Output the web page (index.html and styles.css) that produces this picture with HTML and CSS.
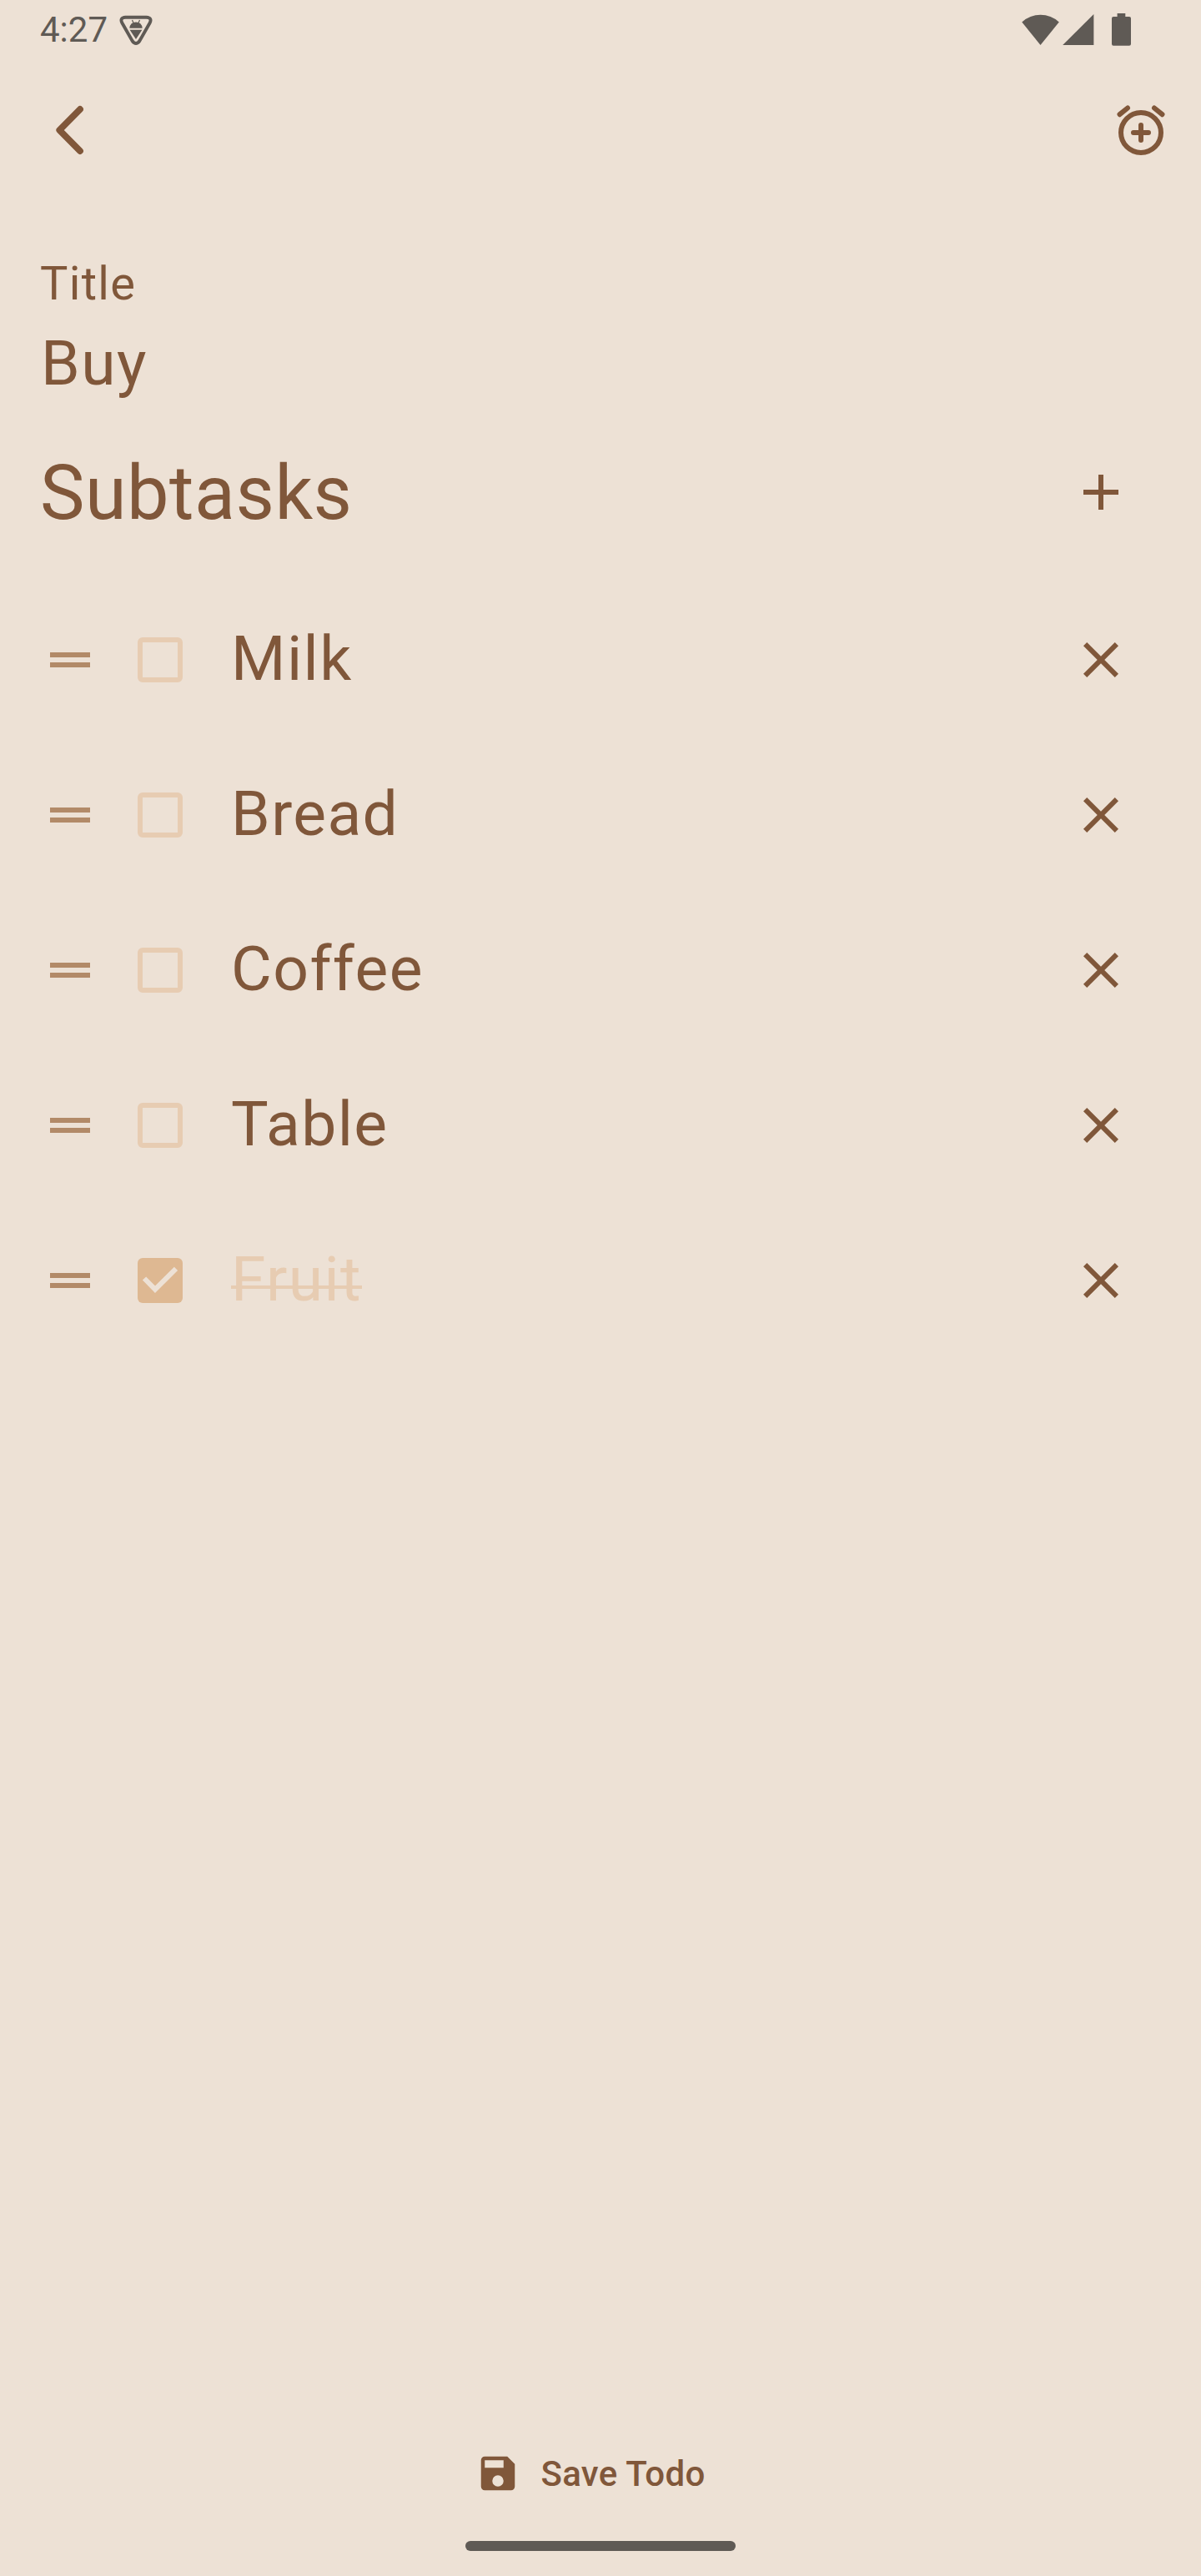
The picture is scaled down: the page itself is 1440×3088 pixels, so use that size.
FILE: index.html
```html
<!DOCTYPE html>
<html lang="en">
<head>
<meta charset="utf-8">
<title>Edit todo</title>
<link rel="stylesheet" href="styles.css">
</head>
<body>
<div class="screen">
  <header class="status-bar">
    <span class="clock">4:27</span>
    <svg class="shield" width="40" height="40" viewBox="0 0 40 40">
      <path d="M7.500 4.700H32.500Q39.800 5.200 36.600 11.500L24.400 33Q20 39 15.600 33L3.400 11.500Q.2 5.200 7.500 4.700Z" fill="none" stroke="currentColor" stroke-width="3.900"/>
      <path d="M17 11.600L15.500 8M23 11.600L24.500 8" fill="none" stroke="currentColor" stroke-width="1.200"/>
      <path d="M12.300 17.700Q13.200 10.500 20 10.500T27.700 17.700ZM12.600 19.700H27.400L20 30.900Z" fill="currentColor"/>
    </svg>
    <svg class="signals" width="140" height="72" viewBox="0 0 140 72" fill="currentColor">
      <path d="M5.300 26.500A33 33 0 0 1 49.800 26.500L27.500 54Z"/>
      <path d="M54.200 54L91.400 17V54Z"/>
      <path d="M119.600 16H129.300V20H134Q136 20 136 22V52.700Q136 54.700 134 54.700H115Q113 54.700 113 52.700V22Q113 20 115 20H119.600Z"/>
    </svg>
  </header>

  <nav class="top-bar">
    <svg width="72" height="72" viewBox="0 0 72 72" fill="none" stroke="currentColor" stroke-width="7.800" stroke-linecap="round" stroke-linejoin="round"><path d="M48 11L23.300 36L48 61"/></svg>
    <svg width="72" height="72" viewBox="0 0 72 72" fill="none" stroke="currentColor" stroke-width="6" stroke-linecap="round"><circle cx="36" cy="39" r="24"/><path d="M27 39H45M36 30V48M10.500 17.200L20 9.500M61.500 17.200L52 9.500"/></svg>
  </nav>

  <main class="content">
    <label class="field-label">Title</label>
    <div class="field-value">Buy</div>

    <div class="section-head">
      <h1 class="section-title">Subtasks</h1>
      <svg class="action" width="72" height="72" viewBox="0 0 24 24"><path d="M19 13h-6v6h-2v-6H5v-2h6V5h2v6h6z"/></svg>
    </div>

    <ul class="tasks">
      <li class="task"><span class="handle"></span><span class="box"></span><span class="name">Milk</span><svg class="action" width="72" height="72" viewBox="0 0 24 24"><path d="M19 6.41L17.59 5 12 10.59 6.41 5 5 6.41 10.59 12 5 17.59 6.41 19 12 13.41 17.59 19 19 17.59 13.41 12z"/></svg></li>
      <li class="task"><span class="handle"></span><span class="box"></span><span class="name">Bread</span><svg class="action" width="72" height="72" viewBox="0 0 24 24"><path d="M19 6.41L17.59 5 12 10.59 6.41 5 5 6.41 10.59 12 5 17.59 6.41 19 12 13.41 17.59 19 19 17.59 13.41 12z"/></svg></li>
      <li class="task"><span class="handle"></span><span class="box"></span><span class="name">Coffee</span><svg class="action" width="72" height="72" viewBox="0 0 24 24"><path d="M19 6.41L17.59 5 12 10.59 6.41 5 5 6.41 10.59 12 5 17.59 6.41 19 12 13.41 17.59 19 19 17.59 13.41 12z"/></svg></li>
      <li class="task"><span class="handle"></span><span class="box"></span><span class="name">Table</span><svg class="action" width="72" height="72" viewBox="0 0 24 24"><path d="M19 6.41L17.59 5 12 10.59 6.41 5 5 6.41 10.59 12 5 17.59 6.41 19 12 13.41 17.59 19 19 17.59 13.41 12z"/></svg></li>
      <li class="task"><span class="handle"></span><span class="box checked"><svg width="54" height="54" viewBox="0 0 54 54" fill="none" stroke="currentColor" stroke-width="6"><path d="M8 24.500L21 37.700L46 12.800"/></svg></span><span class="name done">Fruit</span><svg class="action" width="72" height="72" viewBox="0 0 24 24"><path d="M19 6.41L17.59 5 12 10.59 6.41 5 5 6.41 10.59 12 5 17.59 6.41 19 12 13.41 17.59 19 19 17.59 13.41 12z"/></svg></li>
    </ul>
  </main>

  <footer class="footer">
    <button class="save">
      <svg width="54" height="54" viewBox="0 0 24 24" fill="currentColor"><path fill-rule="evenodd" d="M17 3H5C3.890 3 3 3.900 3 5V19C3 20.100 3.890 21 5 21H19C20.100 21 21 20.100 21 19V7ZM12 19A3 3 0 1 1 12 13A3 3 0 1 1 12 19ZM15 9H5V5H15Z"/></svg>
      <span>Save Todo</span>
    </button>
    <div class="home-bar"></div>
  </footer>
</div>
</body>
</html>
```
FILE: styles.css
```css
* { box-sizing: border-box; }

body {
  margin: 0;
  background: #ede1d5;
  color: #80573a;
  font-family: Roboto, sans-serif;
}

svg { display: block; flex: none; }

.screen {
  width: 1440px;
  height: 3088px;
  display: flex;
  flex-direction: column;
}

.status-bar {
  height: 72px;
  padding: 0 80px 0 48px;
  display: flex;
  align-items: center;
  color: #5f5a55;
}

.clock {
  width: 95px;
  font-size: 42px;
  line-height: 72px;
}

.signals { margin-left: auto; }

.top-bar {
  height: 168px;
  padding: 0 36px 0 48px;
  display: flex;
  align-items: center;
  justify-content: space-between;
}

.content {
  flex: 1;
  padding: 55px 84px 0 48px;
}

.field-label {
  display: block;
  font-size: 56px;
  line-height: 90px;
  letter-spacing: 1.3px;
}

.field-value {
  padding-left: 1px;
  font-size: 75px;
  line-height: 100px;
  letter-spacing: 1.5px;
}

.section-head {
  height: 210px;
  display: flex;
  align-items: center;
  justify-content: space-between;
}

.section-title {
  margin: 0;
  padding-top: 3px;
  font-size: 90px;
  font-weight: 400;
  line-height: 120px;
  letter-spacing: 0.5px;
}

.action { fill: currentColor; }

.tasks {
  margin: 3px 0 0;
  padding: 0 0 0 12px;
  list-style: none;
}

.task {
  height: 186px;
  display: flex;
  align-items: center;
}

.handle {
  width: 48px;
  height: 18px;
  border: solid #b28a68;
  border-width: 6px 0;
}

.box {
  width: 54px;
  height: 54px;
  margin: 0 58px 0 57px;
  border: 6px solid #e7ccb2;
  border-radius: 6px;
}

.box.checked {
  border: 0;
  background: #deb892;
  color: #ede1d5;
}

.name {
  margin-right: auto;
  padding-bottom: 5px;
  font-size: 75px;
  line-height: 100px;
  letter-spacing: 1.4px;
}

.name.done {
  color: #e7ccb2;
  background: linear-gradient(#e7ccb2, #e7ccb2) 0 58px / 100% 4px no-repeat;
}

.footer {
  height: 188px;
  padding-bottom: 30px;
  display: flex;
  flex-direction: column;
  align-items: center;
  justify-content: space-between;
}

.save {
  height: 130px;
  margin-right: 24px;
  padding: 0;
  border: 0;
  background: none;
  display: flex;
  align-items: center;
  gap: 24px;
  color: inherit;
  font: 500 42px/60px Roboto, sans-serif;
  letter-spacing: 0.3px;
}

.save span { padding-top: 1px; }

.home-bar {
  width: 324px;
  height: 12px;
  border-radius: 6px;
  background: #5f5a55;
}
```
